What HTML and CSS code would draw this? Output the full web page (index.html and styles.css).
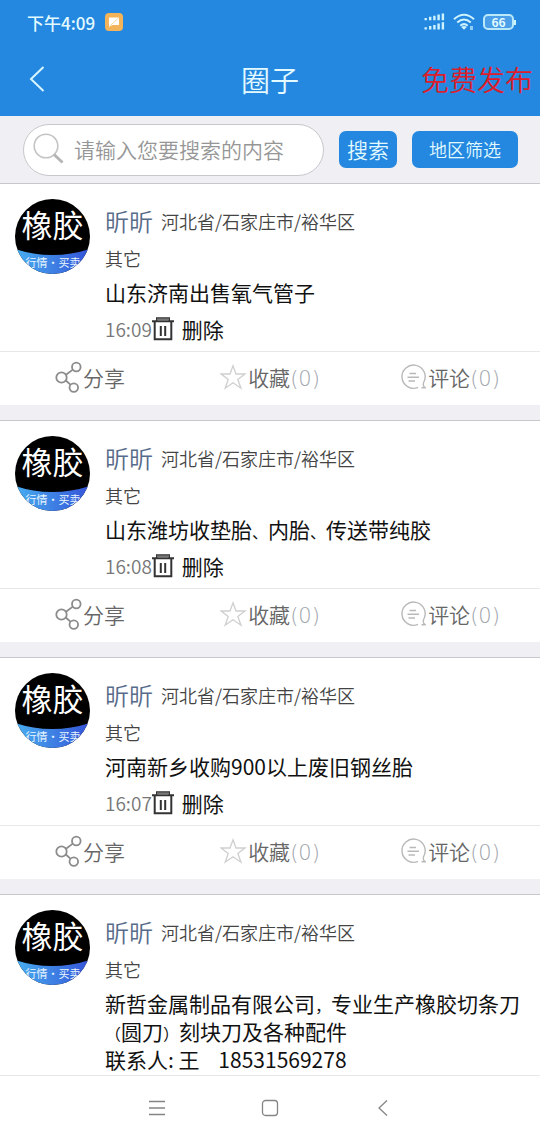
FILE: index.html
```html
<!DOCTYPE html>
<html lang="zh-CN">
<head>
<meta charset="utf-8">
<meta name="viewport" content="width=device-width, initial-scale=1">
<title>圈子</title>
<link rel="stylesheet" href="styles.css">
</head>
<body>
<svg class="defs" width="0" height="0" aria-hidden="true">
  <defs>
    <linearGradient id="band" x1="0" x2="1" y1="0" y2="0">
      <stop offset="0" stop-color="#48aef0"/>
      <stop offset="1" stop-color="#3453d8"/>
    </linearGradient>
    <clipPath id="round"><circle cx="37.5" cy="37.5" r="37.5"/></clipPath>
    <symbol id="avatar" viewBox="0 0 75 75">
      <g clip-path="url(#round)">
        <rect width="75" height="75" fill="#000"/>
        <path d="M0 50 Q37 62 75 50 V75 H0Z" fill="url(#band)"/>
        <text x="37.5" y="38" text-anchor="middle" font-size="31" fill="#fff">橡胶</text>
        <text x="38" y="68" text-anchor="middle" font-size="11" fill="#e8f6ff">行情・买卖</text>
      </g>
    </symbol>
    <symbol id="trash" viewBox="0 0 22 24">
      <path d="M0 4.2H22M5 3.5V1.3H17V3.5M2.7 4V22.3H19.3V4" fill="none" stroke="#333" stroke-width="2"/>
      <path d="M5 2.4H17" stroke="#777" stroke-width="2"/>
      <path d="M8.8 9V19M13.2 9V19" stroke="#333" stroke-width="2"/>
    </symbol>
    <symbol id="share" viewBox="0 0 28 32">
      <g fill="none" stroke="#8c8c8c" stroke-width="1.8">
        <circle cx="6.5" cy="16.5" r="5.2"/><circle cx="21.3" cy="6" r="4.3"/><circle cx="18.8" cy="26.6" r="4.3"/>
        <path d="M11 13.8L17.8 8.6M10.8 19.5L15.4 23.7"/>
      </g>
    </symbol>
    <symbol id="star" viewBox="0 0 28 32">
      <path d="M13 4.8L16 13H25L17.8 18.4L21 27.2L13 21.8L5.2 27.2L8.2 18.4L1.2 13H10Z" fill="none" stroke="#cfcfcf" stroke-width="1.3"/>
    </symbol>
    <symbol id="comment" viewBox="0 0 28 32">
      <g fill="none" stroke="#b9b9b9" stroke-width="1.4">
        <path d="M18 26.4A11.6 11.6 0 1 1 23.6 21.5C23 23.5 23.2 26 25.8 26.8H21.5"/>
        <path d="M9.5 12.5H16M7.5 16.3H19M8.5 20H15"/>
      </g>
    </symbol>
  </defs>
</svg>

<header class="top">
  <div class="status">
    <span class="clock">下午4:09</span>
    <svg class="notice" width="18" height="18" viewBox="0 0 18 18" aria-hidden="true">
      <rect width="18" height="18" rx="4" fill="#f3b359"/>
      <path d="M4 4.5H14V12H7.5L4 14Z" fill="#fff"/>
      <path d="M4 13.8L13.8 4.7" stroke="#f9d9a5" stroke-width="1"/>
    </svg>
    <span class="spacer"></span>
    <svg width="21" height="18" viewBox="0 0 21 18" aria-hidden="true">
      <g fill="none" stroke="#cdf3ff" stroke-width="2.4">
        <path d="M1.7 5V7.3M6.2 3.8V7.3M10.4 2.8V7.3M14.6 1.6V7.3M18.9 .5V7.3M1.7 14.2V16.5M6.2 13V16.5M10.4 12V16.5M14.6 10.5V16.5M18.9 9.2V16.5"/>
      </g>
    </svg>
    <svg width="22" height="18" viewBox="0 0 22 18" aria-hidden="true">
      <g fill="none" stroke="#cdf3ff" stroke-width="2">
        <path d="M1 6.2Q11-2.6 21 6.2M4.2 9.5Q11 3.5 17.8 9.5M7.3 12.7Q11 9.5 14.7 12.7"/>
      </g>
      <path d="M8.2 14Q11 12.2 13.8 14L11 16.8Z" fill="#cdf3ff"/>
      <path d="M17 13h3v4h-3z" fill="#8fcdf5"/>
    </svg>
    <span class="battery"><span class="level">66</span></span>
  </div>
  <div class="titlebar">
    <button class="back" type="button" aria-label="返回">
      <svg width="16" height="26" viewBox="0 0 16 26"><path d="M14.5 1L2 13L14.5 25" fill="none" stroke="#d8f6ff" stroke-width="2"/></svg>
    </button>
    <h1 class="title">圈子</h1>
    <a class="publish" href="#">免费发布</a>
  </div>
</header>

<form class="search">
  <label class="field">
    <svg width="32" height="32" viewBox="0 0 32 32" aria-hidden="true">
      <circle cx="13" cy="13" r="11.8" fill="none" stroke="#c4c4c4" stroke-width="1.6"/>
      <path d="M21 21.5L29.5 29.5" stroke="#b5b5b5" stroke-width="3"/>
    </svg>
    <input class="query" type="text" aria-label="搜索" placeholder="请输入您要搜索的内容">
  </label>
  <button class="btn" type="button">搜索</button>
  <button class="btn region" type="button">地区筛选</button>
</form>

<main class="feed">
  <article class="post">
    <div class="body">
      <svg class="avatar" role="img" aria-label="橡胶"><use href="#avatar"/></svg>
      <div class="info">
        <div class="who"><a class="name" href="#">昕昕</a><span class="place">河北省/石家庄市/裕华区</span></div>
        <div class="kind">其它</div>
        <p class="text">山东济南出售氧气管子</p>
        <div class="meta"><time>16:09</time><button class="delete" type="button"><svg class="bin" aria-hidden="true"><use href="#trash"/></svg>删除</button></div>
      </div>
    </div>
    <div class="actions">
      <button class="action" type="button"><svg class="icon" aria-hidden="true"><use href="#share"/></svg>分享</button>
      <button class="action" type="button"><svg class="icon" aria-hidden="true"><use href="#star"/></svg>收藏<span class="count">(0)</span></button>
      <button class="action" type="button"><svg class="icon" aria-hidden="true"><use href="#comment"/></svg>评论<span class="count">(0)</span></button>
    </div>
  </article>

  <article class="post">
    <div class="body">
      <svg class="avatar" role="img" aria-label="橡胶"><use href="#avatar"/></svg>
      <div class="info">
        <div class="who"><a class="name" href="#">昕昕</a><span class="place">河北省/石家庄市/裕华区</span></div>
        <div class="kind">其它</div>
        <p class="text">山东潍坊收垫胎<span class="mark">、</span>内胎<span class="mark">、</span>传送带纯胶</p>
        <div class="meta"><time>16:08</time><button class="delete" type="button"><svg class="bin" aria-hidden="true"><use href="#trash"/></svg>删除</button></div>
      </div>
    </div>
    <div class="actions">
      <button class="action" type="button"><svg class="icon" aria-hidden="true"><use href="#share"/></svg>分享</button>
      <button class="action" type="button"><svg class="icon" aria-hidden="true"><use href="#star"/></svg>收藏<span class="count">(0)</span></button>
      <button class="action" type="button"><svg class="icon" aria-hidden="true"><use href="#comment"/></svg>评论<span class="count">(0)</span></button>
    </div>
  </article>

  <article class="post">
    <div class="body">
      <svg class="avatar" role="img" aria-label="橡胶"><use href="#avatar"/></svg>
      <div class="info">
        <div class="who"><a class="name" href="#">昕昕</a><span class="place">河北省/石家庄市/裕华区</span></div>
        <div class="kind">其它</div>
        <p class="text">河南新乡收购900以上废旧钢丝胎</p>
        <div class="meta"><time>16:07</time><button class="delete" type="button"><svg class="bin" aria-hidden="true"><use href="#trash"/></svg>删除</button></div>
      </div>
    </div>
    <div class="actions">
      <button class="action" type="button"><svg class="icon" aria-hidden="true"><use href="#share"/></svg>分享</button>
      <button class="action" type="button"><svg class="icon" aria-hidden="true"><use href="#star"/></svg>收藏<span class="count">(0)</span></button>
      <button class="action" type="button"><svg class="icon" aria-hidden="true"><use href="#comment"/></svg>评论<span class="count">(0)</span></button>
    </div>
  </article>

  <article class="post">
    <div class="body">
      <svg class="avatar" role="img" aria-label="橡胶"><use href="#avatar"/></svg>
      <div class="info">
        <div class="who"><a class="name" href="#">昕昕</a><span class="place">河北省/石家庄市/裕华区</span></div>
        <div class="kind">其它</div>
        <p class="text">新哲金属制品有限公司<span class="mark">，</span>专业生产橡胶切条刀<br><span class="mark">（</span>圆刀<span class="mark">）</span>刻块刀及各种配件<br>联系人: 王&nbsp;&nbsp;&nbsp;&nbsp;18531569278</p>
      </div>
    </div>
  </article>
</main>

<nav class="keys">
  <button class="key" type="button" aria-label="菜单"><svg width="18" height="18" viewBox="0 0 18 18"><path d="M1 2.5H17M1 9H17M1 15.5H17" stroke="#858585" stroke-width="1.3"/></svg></button>
  <button class="key" type="button" aria-label="主页"><svg width="18" height="18" viewBox="0 0 18 18"><rect x="1.5" y="1.5" width="15" height="15" rx="3" fill="none" stroke="#858585" stroke-width="1.3"/></svg></button>
  <button class="key" type="button" aria-label="返回"><svg width="18" height="18" viewBox="0 0 18 18"><path d="M13 1.5L5 9L13 16.5" fill="none" stroke="#858585" stroke-width="1.3"/></svg></button>
</nav>
</body>
</html>
```
FILE: styles.css
```css
* {
  box-sizing: border-box;
}

body {
  margin: 0;
  height: 100vh;
  display: flex;
  flex-direction: column;
  background: #fff;
  color: #111;
  font-family: "Noto Sans CJK SC", sans-serif;
  font-size: 21px;
}

button,
input {
  font: inherit;
  color: inherit;
  border: 0;
  padding: 0;
  margin: 0;
  background: none;
}

a {
  text-decoration: none;
}

svg {
  display: block;
  flex: none;
}

.defs {
  position: absolute;
}

.top {
  flex: none;
  background: #2488e0;
  color: #e2faff;
}

.status {
  display: flex;
  align-items: center;
  gap: 8px;
  height: 44px;
  padding: 0 24px 0 27px;
}

.clock {
  font-size: 17px;
  font-weight: 500;
}

.notice {
  margin-left: 2px;
}

.spacer {
  flex: 1;
}

.battery {
  display: flex;
  align-items: center;
}

.battery::after {
  content: "";
  width: 2px;
  height: 5px;
  background: #cdf3ff;
}

.level {
  width: 31px;
  height: 16px;
  border: 2px solid #b9e8fb;
  border-radius: 5px;
  background: #4a9fe8;
  font-size: 12px;
  font-weight: 700;
  line-height: 12px;
  text-align: center;
}

.titlebar {
  display: grid;
  grid-template-columns: 1fr auto 1fr;
  align-items: center;
  height: 72px;
  padding: 0 7px 3px 29px;
}

.back {
  justify-self: start;
}

.title {
  margin: 0 22px 0 0;
  font-size: 29px;
  font-weight: 350;
  line-height: 40px;
}

.publish {
  justify-self: end;
  color: #dc1d2b;
  font-size: 28px;
  font-weight: 350;
  line-height: 40px;
}

.search {
  flex: none;
  display: flex;
  align-items: center;
  gap: 15px;
  height: 67px;
  padding: 0 22px 0 23px;
  background: #efeff4;
}

.field {
  flex: 1;
  min-width: 0;
  display: flex;
  align-items: center;
  gap: 9px;
  height: 52px;
  padding: 0 9px 2px;
  border: 1px solid #c8c8cc;
  border-radius: 26px;
  background: #fff;
}

.query {
  flex: 1;
  min-width: 0;
  height: 40px;
  outline: none;
  font-weight: 350;
}

.query::placeholder {
  color: #969696;
  opacity: 1;
}

.btn {
  height: 37px;
  padding: 0 8px;
  border-radius: 7px;
  background: #2488e0;
  color: #e2faff;
  font-weight: 350;
  line-height: 37px;
}

.region {
  padding: 0 17px;
  font-size: 18px;
}

.feed {
  flex: 1;
  min-height: 0;
  overflow: hidden;
  display: flex;
  flex-direction: column;
  gap: 15px;
  background: #efeff4;
}

.post {
  flex: none;
  border-top: 1px solid #c8c8cc;
  background: #fff;
}

.post:last-child {
  flex: 1 0 auto;
}

.body {
  display: flex;
  gap: 15px;
  padding: 0 15px;
}

.avatar {
  width: 75px;
  height: 75px;
  margin-top: 15px;
}

.info {
  flex: 1;
  min-width: 0;
  padding-top: 19px;
}

.who {
  display: flex;
  align-items: center;
  gap: 8px;
  height: 36px;
}

.name {
  color: #576b8a;
  font-size: 24px;
  font-weight: 350;
  line-height: 36px;
}

.place,
.kind {
  color: #444;
  font-size: 18px;
  font-weight: 350;
}

.kind {
  line-height: 39px;
}

.text {
  margin: 0;
  line-height: 28px;
  white-space: nowrap;
}

.mark {
  font-size: 16px;
  line-height: 16px;
}

.meta {
  display: flex;
  align-items: center;
  height: 45px;
}

.meta time {
  color: #777;
  font-size: 19px;
  font-weight: 350;
}

.delete {
  display: flex;
  align-items: center;
  gap: 8px;
}

.bin {
  width: 22px;
  height: 24px;
}

.actions {
  display: grid;
  grid-template-columns: repeat(3, 1fr);
  height: 54px;
  padding-bottom: 3px;
  border-top: 1px solid #e8e8e8;
}

.action {
  display: flex;
  align-items: center;
  justify-content: center;
  color: #666;
  font-weight: 350;
}

.icon {
  width: 28px;
  height: 32px;
}

.count {
  padding-top: 4px;
  color: #9ea3ab;
  font-family: "DejaVu Sans", sans-serif;
  font-weight: 200;
}

.keys {
  flex: none;
  display: flex;
  justify-content: center;
  gap: 95px;
  height: 65px;
  border-top: 1px solid #e8e8e8;
  background: #fff;
}

.key {
  display: flex;
  align-items: center;
}
```
